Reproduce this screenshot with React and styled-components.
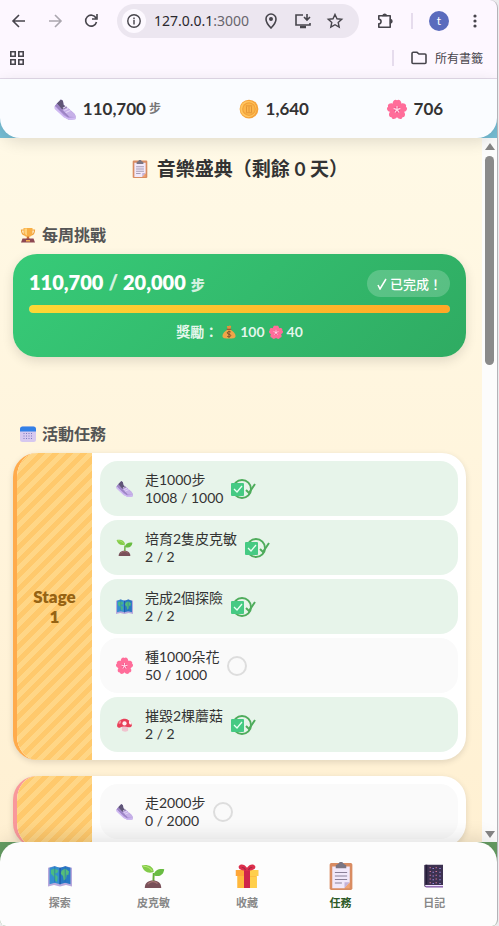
import React from 'react';
import styled, { createGlobalStyle } from 'styled-components';

const GlobalStyle = createGlobalStyle`
  * {
    box-sizing: border-box;
  }

  body {
    margin: 0;
    background: #ececee;
    font-family: Lato, "Noto Sans CJK TC", sans-serif;
    color: #333;
  }

  button {
    border: 0;
    padding: 0;
    background: transparent;
    font: inherit;
    color: inherit;
    cursor: pointer;
  }

  h1, h2, p {
    margin: 0;
  }
`;

const Window = styled.div`
  display: flex;
  flex-direction: column;
  height: 100vh;
  margin-right: 1px;
  border-right: 1px solid #b4b3b8;
  border-radius: 0 8px 6px 6px;
  overflow: hidden;
  background: #fdf7ff;
`;

/* browser bars */

const Chrome = styled.header`
  flex: none;
  border-bottom: 1px solid #e2d9e8;
  color: #47454c;
`;

const Toolbar = styled.div`
  display: flex;
  align-items: center;
  height: 41px;
  padding: 0 4px 0 1px;
`;

const ToolButton = styled.button`
  display: flex;
  align-items: center;
  justify-content: center;
  width: ${(props) => props.$width || 36}px;
  height: 34px;
  color: ${(props) => (props.$dim ? '#aaa6ae' : '#47454c')};
`;

const AddressBar = styled.div`
  display: flex;
  flex: 1;
  align-items: center;
  min-width: 0;
  height: 34px;
  margin: 0 8px;
  padding: 0 8px 0 5px;
  border-radius: 17px;
  background: #ece6f0;
`;

const SiteInfo = styled.button`
  display: flex;
  flex: none;
  align-items: center;
  justify-content: center;
  width: 24px;
  height: 24px;
  margin-right: 8px;
  border-radius: 50%;
  background: #fdf9ff;
`;

const Url = styled.span`
  flex: 1;
  font-family: "Noto Sans", sans-serif;
  font-size: 14px;
  color: #2a282e;

  span {
    color: #68656d;
  }
`;

const Divider = styled.span`
  width: 2px;
  height: 16px;
  margin: 0 8px;
  background: #e6dced;
`;

const Avatar = styled.span`
  width: 20px;
  height: 20px;
  border-radius: 50%;
  background: #5a6bbd;
  color: #fff;
  font-size: 12px;
  line-height: 19px;
  text-align: center;
`;

const Bookmarks = styled.div`
  display: flex;
  align-items: center;
  justify-content: space-between;
  height: 37px;
  padding: 0 14px 4px 0;
`;

const BookmarkFolder = styled.div`
  display: flex;
  align-items: center;
`;

const FolderButton = styled.button`
  display: flex;
  align-items: center;
  gap: 7px;
  margin-left: 8px;
  font-family: "Noto Sans CJK TC", sans-serif;
  font-size: 12px;
  line-height: 18px;
`;

/* game page */

const Game = styled.div`
  display: flex;
  flex: 1;
  flex-direction: column;
  min-height: 0;
  background: linear-gradient(#77bfd6 0%, #77bfd6 40%, #669d63 80%);
`;

const StatusBar = styled.div`
  position: relative;
  z-index: 2;
  display: flex;
  flex: none;
  align-items: center;
  justify-content: space-around;
  height: 59px;
  padding: 0 15px;
  border-radius: 0 0 20px 20px;
  background: #fafcff;
  box-shadow: 0 4px 16px rgba(0, 0, 0, 0.12);
`;

const Stat = styled.div`
  display: flex;
  align-items: center;
  gap: 7px;
  font-size: 17px;
  font-weight: 700;
  line-height: 24px;
`;

const Unit = styled.span`
  font-size: 12px;
  font-weight: 700;
  color: #777;
  margin-left: -4px;
`;

const Body = styled.div`
  display: flex;
  flex: 1;
  min-height: 0;
`;

const Scroller = styled.main`
  flex: 1;
  min-width: 0;
  padding: 16px 16px 16px 13px;
  overflow-y: auto;
  scrollbar-width: none;
  background: linear-gradient(#fff9e6, #fff0d2);
`;

const ScrollTrack = styled.div`
  display: flex;
  flex: none;
  flex-direction: column;
  align-items: center;
  width: 15px;
  padding: 5px 0 4px;
  background: #fcfcfc;
`;

const ScrollArrow = styled.span`
  border: 5px solid transparent;
  border-top-width: ${(props) => (props.$up ? 0 : 7)}px;
  border-bottom-width: ${(props) => (props.$up ? 7 : 0)}px;
  border-${(props) => (props.$up ? 'bottom' : 'top')}-color: #858585;
`;

const ScrollThumb = styled.span`
  width: 9px;
  height: 30%;
  margin: 6px 0 auto;
  border-radius: 5px;
  background: #8a8a8a;
`;

const Title = styled.h1`
  display: flex;
  align-items: center;
  justify-content: center;
  gap: 8px;
  margin-bottom: 39px;
  font-size: 19px;
  line-height: 30px;
  color: #333;
`;

const SectionTitle = styled.h2`
  display: flex;
  align-items: center;
  gap: 6px;
  margin-bottom: 7px;
  padding-left: 7px;
  font-size: 16px;
  line-height: 24px;
  color: #555;
`;

const WeeklyCard = styled.section`
  margin-bottom: 65px;
  padding: 16px;
  border-radius: 24px;
  background: linear-gradient(135deg, #37cb78, #2fab62);
  box-shadow: 0 4px 12px rgba(0, 0, 0, 0.12);
  color: #fff;
`;

const WeeklyTop = styled.div`
  display: flex;
  align-items: center;
  justify-content: space-between;
  height: 27px;
`;

const Count = styled.div`
  display: flex;
  align-items: baseline;
  gap: 5px;
  font-size: 20px;
  font-weight: 800;
  line-height: 30px;
`;

const Faint = styled.span`
  font-size: ${(props) => props.$size}px;
  color: rgba(255, 255, 255, 0.8);
`;

const DoneBadge = styled.span`
  display: flex;
  align-items: center;
  gap: 3px;
  height: 27px;
  padding: 0 8px 0 10px;
  border-radius: 14px;
  background: rgba(255, 255, 255, 0.2);
  font-size: 13px;
  font-weight: 500;
`;

const Track = styled.div`
  height: 8px;
  margin: 8px 0 10px;
  border-radius: 4px;
  overflow: hidden;
  background: rgba(255, 255, 255, 0.3);
`;

const Fill = styled.div`
  height: 100%;
  border-radius: 4px;
  background: linear-gradient(90deg, #fdd835, #ffa726);
`;

const Reward = styled.p`
  display: flex;
  align-items: center;
  justify-content: center;
  gap: 4px;
  font-size: 14px;
  font-weight: 700;
  line-height: 18px;
  color: rgba(255, 255, 255, 0.88);
`;

const StageCard = styled.section`
  display: flex;
  margin-bottom: 16px;
  border-left: 4px solid ${(props) => props.$edge};
  border-radius: 24px;
  overflow: hidden;
  background: #fff;
  box-shadow: 0 2px 6px rgba(0, 0, 0, 0.12);
`;

const StageName = styled.div`
  display: flex;
  flex: none;
  align-items: center;
  justify-content: center;
  width: 75px;
  padding: 0 14px;
  background: repeating-linear-gradient(
    -45deg,
    #ffc96c 0 5px,
    #ffd686 5px 10px
  );
  color: #966313;
  font-size: 17px;
  font-weight: 800;
  line-height: 20px;
  text-align: center;
`;

const TaskList = styled.ul`
  display: flex;
  flex: 1;
  flex-direction: column;
  gap: 4px;
  min-width: 0;
  margin: 0;
  padding: 8px;
  list-style: none;
`;

const Task = styled.li`
  display: flex;
  align-items: center;
  min-height: 55px;
  padding: 0 16px;
  border-radius: 18px;
  background: ${(props) => (props.$done ? '#e7f4ea' : '#fafafa')};
  font-size: 14px;
  line-height: 18px;
`;

const TaskText = styled.div`
  margin: 0 8px 0 12px;
`;

const Ring = styled.span`
  width: 20px;
  height: 20px;
  border: 2px solid #ddd;
  border-radius: 50%;
`;

const Nav = styled.nav`
  position: relative;
  z-index: 2;
  display: flex;
  flex: none;
  height: 84px;
  padding: 0 16px 0 13px;
  border-radius: 20px 20px 0 0;
  background: #fdfdfd;
  box-shadow: 0 -4px 20px rgba(0, 0, 0, 0.12);
`;

const NavItem = styled.button`
  display: flex;
  flex: 1;
  flex-direction: column;
  align-items: center;
  gap: 4px;
  padding-top: 20px;
  font-size: 11px;
  font-weight: 700;
  line-height: 18px;
  color: ${(props) => (props.$active ? '#2d5a27' : '#888')};
`;

const NavIcon = styled.span`
  display: flex;
  align-items: center;
  justify-content: center;
  height: 28px;
`;

const Icon = styled.svg`
  flex: none;
`;

const Svg = ({ size = 17, children }) => (
    <Icon width={size} height={size} viewBox="0 0 32 32" fill="none" aria-hidden="true">
        {children}
    </Icon>
);

const Shoe = ({ size }) => (
    <Svg size={size}>
        <path d="M1 12 10 2l3 2 1 6 8 6 7 6c3 3 3 6 2 9l-9 1-7-4L1 15Z" fill="#b197da" />
        <path d="m10 2-6 6 8 9 7-4-5-3-1-6Z" fill="#5f5577" />
        <path d="m1 12 3-4 8 9 7-3 9 8-8 6Z" fill="#9c84c4" />
        <path d="m12 17 8-3 9 8c2 2 2 4 2 6l-9-1Z" fill="#c6b0e8" />
        <path d="m1 14 1-2 12 13 7 4 10-1v3l-9 1-8-4L1 16Z" fill="#cfb9f2" />
        <path d="m13 15 5-3m-3 6 6-3m-4 6 7-3" stroke="#e6daf8" strokeWidth="1.5" />
    </Svg>
);

const Coin = ({ size }) => (
    <Svg size={size}>
        <circle cx="16" cy="16" r="15" fill="#f5a33b" />
        <circle cx="15" cy="16" r="13" fill="#ffc661" />
        <circle cx="16" cy="16" r="11" fill="#f2a239" />
        <circle cx="16" cy="16" r="9" fill="#fbb64b" />
        <path d="M12 12v9m4-9v9m4-9v9M11 11h10M11 22h10" stroke="#de8e33" strokeWidth="1.3" />
    </Svg>
);

const Flower = ({ size }) => (
    <Svg size={size}>
        {[0, 72, 144, 216, 288].map((angle) => (
            <path
                key={angle}
                d="M16 18C11 14 9 11 9 7c0-3 2-6 5-6l2 1 2-1c3 0 5 3 5 6 0 4-2 7-7 11Z"
                fill="#ff6d9a"
                transform={`rotate(${angle} 16 17)`}
            />
        ))}
        <circle cx="16" cy="17" r="5" fill="#f2548b" />
        {[0, 72, 144, 216, 288].map((angle) => (
            <path key={angle} d="M16 17v-5" stroke="#ffdbe8" strokeWidth="1.8" strokeLinecap="round" transform={`rotate(${angle} 16 17)`} />
        ))}
    </Svg>
);

const Clipboard = ({ size }) => (
    <Svg size={size}>
        <rect x="3" y="1" width="26" height="31" rx="2" fill="#d98c62" />
        <path d="M6 5h20v19l-6 6H6Z" fill="#f1e8fa" />
        <path d="M26 23h-6v7Z" fill="#c4b2d8" />
        <path d="M20 30l6-7v7Z" fill="#f0a272" />
        <path d="M10 4c0-1 2-1 3-2 1-3 5-3 6 0 1 1 3 1 3 2v3H10Z" fill="#7b7582" />
        <path d="M9 12h14M9 16h14M9 20h14M9 24h8" stroke="#8a8098" strokeWidth="1.3" />
    </Svg>
);

const Trophy = ({ size }) => (
    <Svg size={size}>
        <path d="M8 6H3c0 7 3 10 8 10M24 6h5c0 7-3 10-8 10" stroke="#efa23c" strokeWidth="2.4" />
        <path d="M7 2h18v9c0 6-4 9-9 9s-9-3-9-9Z" fill="#f9af45" />
        <path d="M9 3h5v14c-4-2-5-4-5-8Z" fill="#ffd27c" />
        <path d="M14 19h4l1 5h-6Z" fill="#cb6c35" />
        <path d="M5 23h22l3 8H2Z" fill="#8d4852" />
        <path d="M12 26h8v3h-8Z" fill="#f6b04f" />
    </Svg>
);

const MoneyBag = ({ size }) => (
    <Svg size={size}>
        <path d="M11 3c2-2 3 0 5-1s3-1 5 1l-2 7h-6Z" fill="#e2933e" />
        <path d="M13 10h6c7 4 12 9 12 15 0 5-5 6-15 6S1 30 1 25c0-6 5-11 12-15Z" fill="#f0a548" />
        <path d="M12 10h8" stroke="#a45436" strokeWidth="2.5" strokeLinecap="round" />
        <path d="M20 16c-3-2-8-1-8 2 0 4 8 2 8 6 0 3-5 4-8 2m4-13v16" stroke="#794e2b" strokeWidth="2.2" />
    </Svg>
);

const Calendar = ({ size }) => (
    <Svg size={size}>
        <rect x="0" y="1" width="32" height="31" rx="5" fill="#d6c8ef" />
        <path d="M0 11V6c0-3 2-5 5-5h22c3 0 5 2 5 5v5Z" fill="#3380e6" />
        {[15, 20, 25].map((y) => (
            <path key={y} d={`M7 ${y}h2m3 0h2m3 0h2m3 0h2`} stroke="#7b7ac0" strokeWidth="2.4" />
        ))}
    </Svg>
);

const Seedling = ({ size }) => (
    <Svg size={size}>
        <path d="M17 25c-1-5 0-8 0-13" stroke="#64ac38" strokeWidth="2.6" />
        <path d="M16 11C8 13 3 9 1 2c6-2 15 0 16 8Z" fill="#83cb4a" />
        <path d="M17 15c1-7 7-9 14-8-1 8-7 11-14 8Z" fill="#69bc42" />
        <path d="M3 3c5 0 9 2 12 6" stroke="#b3e66f" strokeWidth="1.4" />
        <path d="M5 32c0-7 5-10 11-10s11 3 11 10Z" fill="#795059" />
        <path d="M9 27c3-4 9-5 13-1" stroke="#a57472" strokeWidth="1.5" />
    </Svg>
);

const WorldMap = ({ size }) => (
    <Svg size={size}>
        <path d="m0 5 8-2 8 2 8-2 8 2v25l-8-2-8 2-8-2-8 2Z" fill="#b8a8dc" />
        <path d="m2 5 7-2 7 2v22l-7-2-7 2Z" fill="#348ed0" />
        <path d="m16 5 7-2 7 2v22l-7-2-7 2Z" fill="#2878c4" />
        <path d="m4 8 5-2 5 3-2 3-3 1 4 4-1 7-3-2-1-5-4-4Z" fill="#49ba84" />
        <path d="m18 9 5-3 5 4-1 5-2-1-1 6-3 2-1-6-3-3Z" fill="#55bd79" />
        <path d="M9 3v22M23 3v22" stroke="#2169b7" strokeWidth="0.8" />
        <path d="M16 5v22" stroke="#1b509e" strokeWidth="1.5" />
    </Svg>
);

const Mushroom = ({ size }) => (
    <Svg size={size}>
        <path d="M11 19h11l1 8c0 3-10 4-12 0Z" fill="#f0c3cf" />
        <path d="M2 18C3 9 9 5 17 5c7 1 12 6 13 12 0 4-4 5-7 4-6-2-12-1-16 1-3 1-5-1-5-4Z" fill="#e83f59" />
        <path d="M4 13 8 8c3 2 2 6-1 7Z" fill="#f78a97" />
        <path d="M25 9c2 0 5 4 4 7-4 1-6-3-4-7Z" fill="#fff1f4" />
        <circle cx="16" cy="14" r="4" fill="#fff1f4" />
    </Svg>
);

const Gift = ({ size }) => (
    <Svg size={size}>
        <path d="M3 13h26v19H3Z" fill="#ffb83c" />
        <path d="M1 8h30v8H1Z" fill="#ffa638" />
        <path d="M19 8h12v8H19ZM20 17h9v15h-9Z" fill="#ffcf4b" />
        <path d="M12 8h8v24h-8Z" fill="#cf244b" />
        <path d="M16 9C9 9 4 7 5 3c2-4 8-3 11 2 3-5 9-6 11-2 1 4-4 6-11 6Z" fill="#dd2f4c" />
        <path d="M9 5c2-1 4 1 5 3M23 5c-2-1-4 1-5 3" stroke="#a32648" strokeWidth="1.5" />
    </Svg>
);

const Notebook = ({ size }) => (
    <Svg size={size}>
        <path d="M4 1h24v30H6c-2 0-3-1-3-3V2Z" fill="#3d3251" />
        <path d="M4 28h24v2H5Z" fill="#f1e3ff" />
        <path d="M4 30h24v1H5Z" fill="#9051c2" />
        <path d="M6 1v26" stroke="#241d38" strokeWidth="2" />
        {[5, 10, 15, 20, 25].map((y) => (
            <g key={y}>
                <path d={`M10 ${y}h2m6 0h2`} stroke="#d87b9c" strokeWidth="1.2" />
                <path d={`M14 ${y + 1}h2m7 0h2`} stroke="#9a8bea" strokeWidth="1.2" />
            </g>
        ))}
    </Svg>
);

const DoneMark = () => (
    <svg width="26" height="22" viewBox="0 0 26 22" fill="none" role="img" aria-label="完成">
        <circle cx="11" cy="11" r="9" stroke="#4fac5c" strokeWidth="2" />
        <path d="m15 12 3 3 6-9" stroke="#4fac5c" strokeWidth="2" />
        <rect x="0" y="5" width="13" height="13" rx="1" fill="#45ca83" />
        <path d="m3 11 3 3 5-6" stroke="#e9fff3" strokeWidth="1.3" />
    </svg>
);

const Line = ({ size = 18, children }) => (
    <svg width={size} height={size} viewBox="0 0 18 18" fill="none" stroke="currentColor" strokeWidth="1.6" aria-hidden="true">
        {children}
    </svg>
);

const stages = [
    {
        name: 'Stage 1',
        edge: '#ffab4c',
        tasks: [
            { icon: Shoe, label: '走1000步', progress: '1008 / 1000', done: true },
            { icon: Seedling, label: '培育2隻皮克敏', progress: '2 / 2', done: true },
            { icon: WorldMap, label: '完成2個探險', progress: '2 / 2', done: true },
            { icon: Flower, label: '種1000朵花', progress: '50 / 1000', done: false },
            { icon: Mushroom, label: '摧毀2棵蘑菇', progress: '2 / 2', done: true },
        ],
    },
    {
        name: '',
        edge: '#f9989b',
        tasks: [
            { icon: Shoe, label: '走2000步', progress: '0 / 2000', done: false },
        ],
    },
];

const tabs = [
    { icon: WorldMap, label: '探索' },
    { icon: Seedling, label: '皮克敏' },
    { icon: Gift, label: '收藏' },
    { icon: Clipboard, label: '任務', active: true },
    { icon: Notebook, label: '日記' },
];

const BrowserBars = () => (
    <Chrome>
        <Toolbar>
            <ToolButton aria-label="Back">
                <Line><path d="M15 9H4m5-6L3 9l6 6" /></Line>
            </ToolButton>
            <ToolButton $dim aria-label="Forward">
                <Line><path d="M3 9h11M9 3l6 6-6 6" /></Line>
            </ToolButton>
            <ToolButton aria-label="Reload">
                <Line><path d="M14 6a5.5 5.5 0 1 0 .5 4M15 2v5h-5" /></Line>
            </ToolButton>
            <AddressBar>
                <SiteInfo aria-label="Site information">
                    <Line size={16}><circle cx="9" cy="9" r="7" /><path d="M9 8v5M9 5v2" /></Line>
                </SiteInfo>
                <Url>127.0.0.1<span>:3000</span></Url>
                <ToolButton $width={32} aria-label="Location">
                    <Line><path d="M9 16C6 13 4 10 4 7a5 5 0 0 1 10 0c0 3-2 6-5 9Z" /><circle cx="9" cy="7" r="1.2" fill="currentColor" /></Line>
                </ToolButton>
                <ToolButton $width={32} aria-label="Install">
                    <Line><path d="M9 3H2v10h14v-2M13 2v6m-3-3 3 3 3-3" /><path d="M6 15h6" strokeWidth="2.4" /></Line>
                </ToolButton>
                <ToolButton $width={32} aria-label="Bookmark">
                    <Line><path d="m9 2.5 2 4.3 4.7.5-3.5 3.1 1 4.7L9 12.7l-4.2 2.4 1-4.7-3.5-3.1 4.7-.5Z" strokeWidth="1.4" /></Line>
                </ToolButton>
            </AddressBar>
            <ToolButton aria-label="Extensions">
                <Line>
                    <path d="M2.8 3.8h11.4v11.4H2.8v-3.4c3 0 3-4.6 0-4.6Z" strokeLinejoin="round" />
                    <path d="M7 3.5a1.8 1.8 0 0 1 3.4 0ZM14.6 7.5a1.9 1.9 0 0 1 0 3.6Z" fill="currentColor" />
                </Line>
            </ToolButton>
            <Divider />
            <ToolButton aria-label="Profile"><Avatar>t</Avatar></ToolButton>
            <ToolButton aria-label="Menu">
                <Line>
                    <g fill="currentColor" stroke="none">
                        <circle cx="9" cy="4" r="1.6" /><circle cx="9" cy="9" r="1.6" /><circle cx="9" cy="14" r="1.6" />
                    </g>
                </Line>
            </ToolButton>
        </Toolbar>
        <Bookmarks>
            <ToolButton aria-label="Tab groups">
                <Line><path d="M1.8 2.8h4.4v4.4H1.8ZM9.8 2.8h4.4v4.4H9.8ZM1.8 10.8h4.4v4.4H1.8ZM9.8 10.8h4.4v4.4H9.8Z" /></Line>
            </ToolButton>
            <BookmarkFolder>
                <Divider />
                <FolderButton>
                    <Line><path d="M2 4.5c0-.8.4-1.2 1.2-1.2H7L9 5h6c.7 0 1 .4 1 1v7.5c0 .7-.3 1-1 1H3c-.7 0-1-.3-1-1Z" /></Line>
                    所有書籤
                </FolderButton>
            </BookmarkFolder>
        </Bookmarks>
    </Chrome>
);

const Stage = ({ name, edge, tasks }) => (
    <StageCard $edge={edge}>
        <StageName>{name}</StageName>
        <TaskList>
            {tasks.map(({ icon: TaskIcon, label, progress, done }) => (
                <Task key={label} $done={done}>
                    <TaskIcon size={17} />
                    <TaskText>
                        <div>{label}</div>
                        <div>{progress}</div>
                    </TaskText>
                    {done ? <DoneMark /> : <Ring />}
                </Task>
            ))}
        </TaskList>
    </StageCard>
);

const App = () => {
    const steps = 110700;
    const goal = 20000;

    return (
        <>
            <GlobalStyle />
            <Window>
                <BrowserBars />
                <Game>
                    <StatusBar>
                        <Stat><Shoe size={22} />110,700<Unit>步</Unit></Stat>
                        <Stat><Coin size={20} />1,640</Stat>
                        <Stat><Flower size={20} />706</Stat>
                    </StatusBar>
                    <Body>
                        <Scroller>
                            <Title><Clipboard size={18} />音樂盛典（剩餘 0 天）</Title>
                            <SectionTitle><Trophy size={16} />每周挑戰</SectionTitle>
                            <WeeklyCard>
                                <WeeklyTop>
                                    <Count>
                                        110,700 <Faint $size={20}>/</Faint> 20,000 <Faint $size={14}>步</Faint>
                                    </Count>
                                    <DoneBadge>
                                        <svg width="10" height="12" viewBox="0 0 10 12" fill="none" stroke="#fff" strokeWidth="1.5">
                                            <path d="m1 7 2 4L9 1" />
                                        </svg>
                                        已完成！
                                    </DoneBadge>
                                </WeeklyTop>
                                <Track>
                                    <Fill style={{ width: `${Math.min(100, (steps / goal) * 100)}%` }} />
                                </Track>
                                <Reward>獎勵：<MoneyBag size={14} />100<Flower size={14} />40</Reward>
                            </WeeklyCard>
                            <SectionTitle><Calendar size={16} />活動任務</SectionTitle>
                            {stages.map((stage) => (
                                <Stage key={stage.edge} {...stage} />
                            ))}
                        </Scroller>
                        <ScrollTrack>
                            <ScrollArrow $up />
                            <ScrollThumb />
                            <ScrollArrow />
                        </ScrollTrack>
                    </Body>
                    <Nav>
                        {tabs.map(({ icon: TabIcon, label, active }) => (
                            <NavItem key={label} $active={active}>
                                <NavIcon><TabIcon size={active ? 28 : 24} /></NavIcon>
                                {label}
                            </NavItem>
                        ))}
                    </Nav>
                </Game>
            </Window>
        </>
    );
};

export default App;
